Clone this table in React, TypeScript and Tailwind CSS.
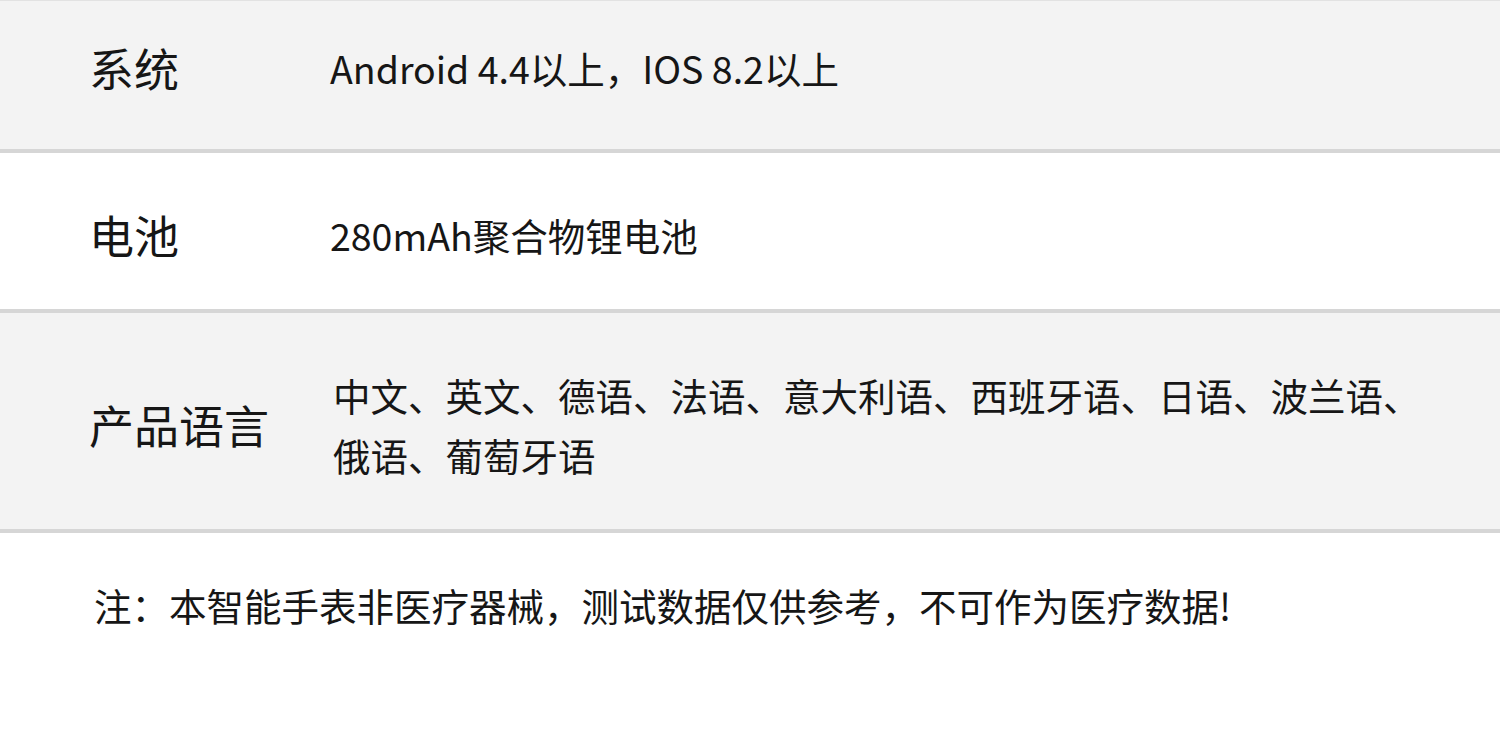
export default function App() {
  const font = { fontFamily: '"Noto Sans CJK SC", "Noto Sans", sans-serif' };
  return (
    <div className="w-[1500px] h-[736px] bg-white text-[#161616] overflow-hidden" style={font}>
      <div className="border-t border-[#e2e2e2] border-b-4 border-b-[#d6d6d6] bg-[#f3f3f3] h-[153px] pb-[14px] flex items-center">
        <div className="w-[330px] pl-[89px] text-[45px] leading-[60px]">系统</div>
        <div className="text-[37.5px] leading-[60px]">Android 4.4以上，IOS 8.2以上</div>
      </div>
      <div className="border-b-4 border-b-[#d6d6d6] bg-white h-[160px] pt-[8px] flex items-center">
        <div className="w-[330px] pl-[89px] text-[45px] leading-[60px]">电池</div>
        <div className="text-[37.5px] leading-[60px]">280mAh聚合物锂电池</div>
      </div>
      <div className="border-b-4 border-b-[#d6d6d6] bg-[#f3f3f3] h-[220px] pt-[8px] flex items-center">
        <div className="w-[330px] pl-[89px] text-[45px] leading-[60px]">产品语言</div>
        <div className="w-[1095px] pl-[3px] text-[37.5px] leading-[60px]">
          中文、英文、德语、法语、意大利语、西班牙语、日语、波兰语、俄语、葡萄牙语
        </div>
      </div>
      <div className="pl-[94px] pt-[42px] text-[37.5px] leading-[60px]">
        注：本智能手表非医疗器械，测试数据仅供参考，不可作为医疗数据!
      </div>
    </div>
  );
}
